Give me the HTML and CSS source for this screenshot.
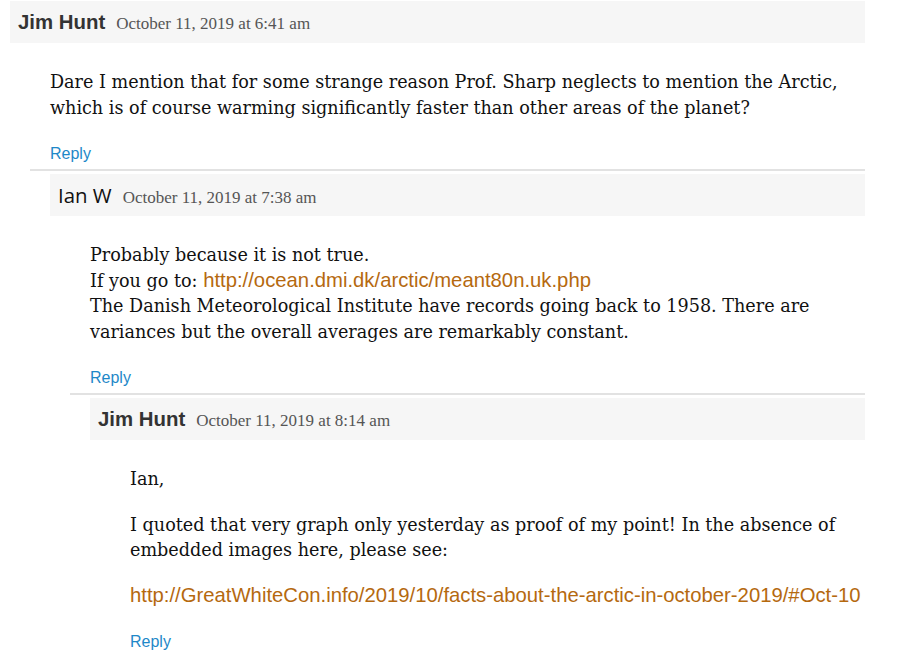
FILE: index.html
```html
<!DOCTYPE html>
<html>
<head>
<meta charset="utf-8">
<link rel="stylesheet" href="styles.css">
</head>
<body>
<div class="thread">
  <div class="comment">
    <div class="comment-header">
      <span class="name name-bold">Jim Hunt</span>
      <span class="date">October 11, 2019 at 6:41 am</span>
    </div>
    <div class="comment-body">
      <p>Dare I mention that for some strange reason Prof. Sharp neglects to mention the Arctic, which is of course warming significantly faster than other areas of the planet?</p>
      <a class="reply" href="#">Reply</a>
    </div>
    <div class="children">
      <div class="comment">
        <div class="comment-header">
          <span class="name name-regular">Ian W</span>
          <span class="date">October 11, 2019 at 7:38 am</span>
        </div>
        <div class="comment-body">
          <p>Probably because it is not true.<br>If you go to: <a class="link" href="#">http://ocean.dmi.dk/arctic/meant80n.uk.php</a><br>The Danish Meteorological Institute have records going back to 1958. There are variances but the overall averages are remarkably constant.</p>
          <a class="reply" href="#">Reply</a>
        </div>
        <div class="children">
          <div class="comment">
            <div class="comment-header">
              <span class="name name-bold">Jim Hunt</span>
              <span class="date">October 11, 2019 at 8:14 am</span>
            </div>
            <div class="comment-body">
              <p>Ian,</p>
              <p>I quoted that very graph only yesterday as proof of my point! In the absence of embedded images here, please see:</p>
              <p><a class="link" href="#">http://GreatWhiteCon.info/2019/10/facts-about-the-arctic-in-october-2019/#Oct-10</a></p>
              <a class="reply" href="#">Reply</a>
            </div>
          </div>
        </div>
      </div>
    </div>
  </div>
</div>
</body>
</html>
```

FILE: styles.css
```css
html, body {
  margin: 0;
  padding: 0;
  background: #ffffff;
}

.thread {
  padding: 1px 49px 0 10px;
}

.comment-header {
  background: #f6f6f6;
  height: 42px;
  line-height: 42px;
  padding: 0 8px;
  white-space: nowrap;
}

.name {
  font-size: 20.4px;
  margin-right: 7px;
}

.name-bold {
  font-family: "Liberation Sans", Arial, sans-serif;
  font-weight: bold;
  color: #333333;
}

.name-regular {
  font-family: "Open Sans", sans-serif;
  color: #111111;
}

.date {
  font-family: "Liberation Serif", serif;
  font-size: 17px;
  color: #555555;
}

.comment-body {
  padding-left: 40px;
  margin-top: 27px;
}

.comment-body p {
  margin: 0 0 20px 0;
  font-family: "DejaVu Serif", serif;
  font-size: 17.6px;
  line-height: 25.5px;
  color: #111111;
}

.reply {
  display: block;
  font-family: "Liberation Sans", Arial, sans-serif;
  font-size: 16px;
  line-height: 26px;
  color: #1e88c8;
  text-decoration: none;
  margin-bottom: 2px;
}

.link {
  font-family: "Liberation Sans", Arial, sans-serif;
  font-size: 20.3px;
  line-height: 20px;
  color: #b5690f;
  text-decoration: none;
}

.children {
  margin-left: 20px;
  border-top: 2px solid #e2e2e2;
  padding: 3px 0 0 20px;
}
```
